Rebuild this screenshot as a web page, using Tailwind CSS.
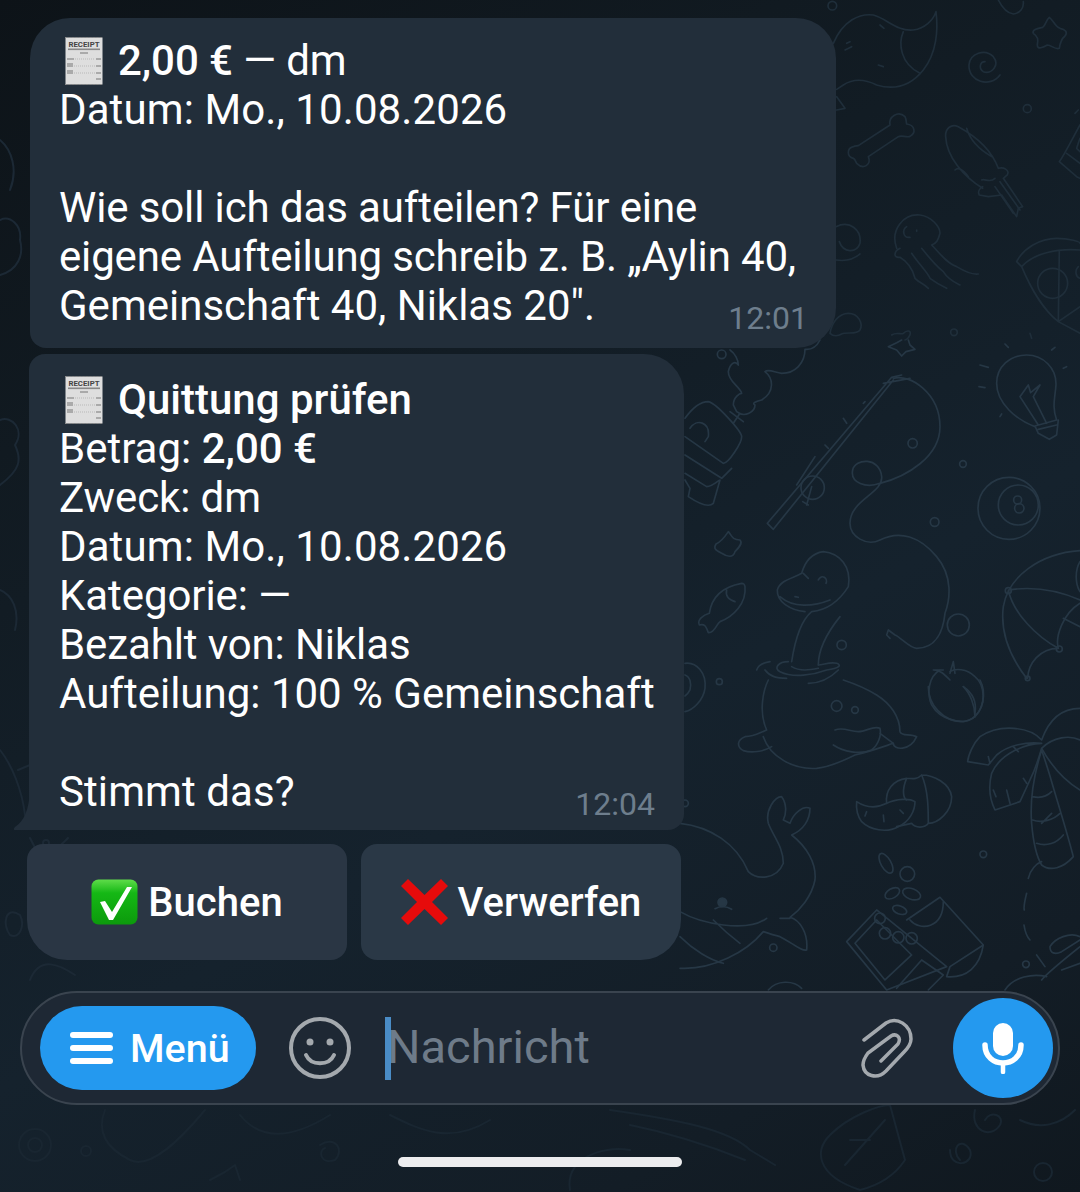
<!DOCTYPE html>
<html lang="de">
<head>
  <meta charset="UTF-8" />
  <meta name="viewport" content="width=device-width, initial-scale=1.0"/>
  <title>Chat</title>
  <script src="https://cdn.jsdelivr.net/npm/@tailwindcss/browser@4"></script>
</head>
<body class="bg-[#111a22]">
<div class="relative w-[1080px] h-[1192px] overflow-hidden font-['Roboto',sans-serif] text-white bg-[linear-gradient(150deg,#0d1318_0%,#111a21_25%,#15222d_60%,#131d26_85%,#10181f_100%)]">

  <!-- Wallpaper doodles -->
  <svg class="absolute inset-0" width="1080" height="1192" viewBox="0 0 1080 1192" fill="none" stroke-linecap="round" stroke-linejoin="round">
    <g stroke="#263745" stroke-width="5">
      <!-- top right -->
      <g transform="translate(800 0) scale(.3333)" stroke="#1f2e3a">
        <path d="M100 130C130 60 180 40 220 45C260 55 290 95 340 90C375 85 400 60 408 35C415 90 410 160 370 210C330 260 280 270 230 255C190 235 160 235 130 255L110 268"/>
        <path d="M310 95C295 130 300 190 360 220M135 150L155 140M140 130L150 125M235 195L250 200M240 75L252 85"/>
        <path d="M110 290L135 325L110 330"/>
        <circle cx="97" cy="17" r="13"/>
        <path d="M595 0C605 20 620 40 640 42C660 40 672 25 670 5"/>
        <path d="M600 225C570 265 505 245 507 195C510 160 555 145 580 170C600 195 575 225 550 215C535 205 540 185 555 185"/>
        <path d="M748 52C760 60 765 80 780 85C795 88 805 95 795 108C783 118 780 130 778 145C765 150 755 135 742 135C730 142 712 150 712 135C715 120 715 110 700 100C695 88 715 85 728 82C738 75 738 60 748 52Z"/>
        <circle cx="682" cy="326" r="12"/>
        <path d="M175 437L270 375C265 350 295 330 315 350C320 360 318 365 320 372C345 375 350 400 328 410C315 412 305 405 295 410L205 470C215 495 190 510 170 490C165 480 165 478 160 475C140 470 140 445 160 440C165 438 170 438 175 437Z"/>
        <path d="M548 565C490 530 440 470 437 410C435 385 455 370 475 380C530 410 575 450 595 505C610 500 630 510 622 525L610 535L668 620L655 625L650 650L605 585L565 590L538 585C532 575 540 565 548 560M500 385C510 420 540 450 575 470M465 510C475 500 490 510 505 530M545 540C555 535 570 550 585 535"/>
        <path d="M600 545L660 630M585 560L640 640"/>
        <path d="M290 745C270 690 310 640 360 645C395 650 420 680 420 700C415 720 410 730 395 735C420 760 440 790 470 800C495 815 515 825 535 822M300 745C280 755 280 775 300 772C330 790 340 815 345 835C360 850 370 850 385 865M335 760C355 790 385 820 390 835C410 850 430 860 440 865M365 745C385 770 410 800 430 815C445 840 470 850 480 855"/>
        <path d="M320 680C305 690 310 715 330 712M350 690L350 694"/>
        <path d="M650 785C670 745 720 715 770 715C810 715 840 725 840 730M650 785L665 800C700 760 770 745 840 750M665 800C690 860 730 930 775 965L840 1000M775 965L840 920M778 755L775 965"/>
        <circle cx="758" cy="850" r="45"/>
        <path d="M835 800C825 810 825 830 840 835"/>
        <path d="M108 680C150 660 185 690 180 730C170 760 130 760 118 725M108 780C140 785 165 775 180 762"/>
        <path d="M90 1000C95 970 115 940 145 940C175 940 190 970 180 990C170 1005 140 995 125 1002C115 1008 100 1010 90 1000Z"/>
        <path d="M275 1005C290 995 305 1005 310 1000C320 990 335 990 330 1005C325 1015 320 1020 315 1020"/>
        <circle cx="462" cy="997" r="10"/>
        <path d="M835 330L825 340M840 375C815 420 790 470 778 485L830 530L840 535M800 460L840 490M840 415L830 445L840 455"/>
        <path d="M690 1000L695 1015"/>
      </g>

      <!-- middle right -->
      <g transform="translate(680 340) scale(.3333)">
        <path d="M420 0C410 20 395 30 375 28C375 70 345 100 305 100C285 98 265 85 255 95C280 115 285 155 245 180C225 185 215 190 225 195C225 215 195 235 170 215L160 195C160 170 180 160 185 160C180 140 145 125 145 95C150 70 165 60 175 75C175 60 165 40 150 30"/>
        <circle cx="125" cy="43" r="13"/>
        <path d="M150 215L190 245M160 250L180 220"/>
        <path d="M15 235C40 200 60 185 85 185C110 190 185 275 185 290C185 310 145 370 130 370L15 290M155 385L125 415L15 345M15 400L80 440C100 440 115 420 120 420L100 490C90 500 70 500 25 470L30 445L15 420M30 265C50 235 90 245 85 290L75 305"/>
        <path d="M665 105L635 112L262 550L280 568L640 120M690 115L610 130M555 185L550 190M490 235L500 250M435 315L445 325M405 350L350 435"/>
        <path d="M640 115C690 100 780 160 780 260C780 350 680 410 600 430C560 445 510 430 518 390C525 355 600 350 605 410C610 460 510 480 510 550C510 590 560 620 600 600C660 570 720 590 770 650C820 710 810 780 795 820C790 870 770 925 710 925C690 925 660 890 645 885L625 870L620 885L630 895"/>
        <circle cx="398" cy="443" r="35"/>
        <path d="M395 440L380 495M368 485L385 495"/>
        <circle cx="698" cy="310" r="14"/><circle cx="849" cy="372" r="10"/><circle cx="764" cy="546" r="13"/><circle cx="485" cy="915" r="14"/><circle cx="118" cy="1025" r="9"/>
        <circle cx="835" cy="855" r="33"/>
        <path d="M1065 260C1010 240 950 190 950 130C950 80 990 45 1040 45C1090 45 1130 85 1128 135C1126 170 1115 200 1130 240L1065 258L1075 280L1108 298L1130 285L1135 240M1075 268L1130 255M1020 170L1045 135L1052 158L1080 135L1060 170L1100 250M1020 170L1075 255"/>
        <path d="M900 75L925 82M897 140L915 143M960 230L965 222M975 12L985 22M1125 22L1115 30M1150 85L1160 80"/>
        <circle cx="987" cy="505" r="93"/><circle cx="1015" cy="495" r="60"/><circle cx="1013" cy="480" r="12"/><circle cx="1018" cy="505" r="14"/>
        <path d="M145 575C155 585 155 600 180 600C190 610 175 625 165 635C160 655 140 650 125 640C105 630 100 625 108 612C125 605 135 590 145 575Z"/>
        <path d="M665 0L650 8L625 20L650 30L665 48L678 35L705 28L690 15L685 0"/>
        <path d="M185 730C130 740 95 770 88 820C70 825 50 840 58 855C75 850 78 860 85 878C105 880 110 850 120 845C160 830 200 790 195 740C193 730 190 730 185 730ZM140 750C135 770 150 780 165 785"/>
        <path d="M335 965C345 900 365 840 395 815C445 810 480 780 505 740C515 680 480 640 430 635C395 640 375 665 365 700C340 715 300 720 292 750C290 785 330 810 375 815M415 975C415 930 440 880 480 830M300 770C340 805 400 800 450 780M370 700L385 715M415 720C425 700 445 715 438 730M345 770L355 772"/>
        <path d="M325 965C295 965 280 985 300 995C340 1015 400 1005 440 990C480 985 485 975 470 970C450 965 430 975 415 975M335 980C360 995 390 990 415 985M230 990C235 975 250 968 270 965M255 990C270 1010 290 1015 320 1015M385 1030C420 1030 450 1015 475 990"/>
        <path d="M15 970C50 965 80 1000 75 1045C70 1080 40 1110 15 1115M15 1005C30 1010 35 1030 30 1050C25 1060 20 1065 15 1068"/>
        <path d="M780 990C745 1010 740 1060 755 1095C780 1140 850 1160 885 1130C920 1095 915 1035 885 1010C860 985 825 985 810 995M850 1040C880 1060 890 1090 885 1120M810 1020C790 1000 780 990 760 990L790 990M810 1000L820 965L825 1000"/>
        <path d="M1040 1015C990 950 960 880 970 800C985 710 1080 640 1200 632M985 750C1050 740 1120 745 1200 780M985 750C1000 820 1070 890 1135 925M1135 925C1080 925 1045 970 1043 1015M1135 925C1125 890 1150 820 1200 790M1150 835L1200 860M1200 665C1185 690 1185 730 1200 755"/>
        <circle cx="985" cy="752" r="9"/><circle cx="1138" cy="927" r="9"/><circle cx="1043" cy="1015" r="7"/>
      </g>

      <!-- lower right -->
      <g transform="translate(680 680) scale(.3333)">
        <path d="M260 150C235 95 250 30 265 0M260 150C235 160 225 170 195 170C170 180 170 200 190 212C215 220 250 215 275 200M250 170C270 230 340 270 410 265C455 260 495 240 525 225C570 215 610 200 640 190C640 210 690 215 710 170C690 160 665 170 660 155C660 110 630 70 590 45C550 20 520 10 490 0"/>
        <path d="M465 150C490 140 510 155 535 155C560 155 580 135 600 145C605 165 595 195 575 210C540 225 490 215 460 195M600 160L640 190"/>
        <circle cx="470" cy="78" r="16"/><circle cx="525" cy="90" r="10"/>
        <path d="M745 20C745 70 785 125 850 125C890 120 915 80 910 30C908 15 905 10 900 0M850 20C870 40 885 75 885 110"/>
        <path d="M1085 180C1110 110 1150 85 1200 85M1085 180C1050 140 960 130 900 170C880 190 865 225 863 245L925 255L950 225C985 195 1040 185 1085 190C1040 190 960 220 935 280C925 320 930 360 945 390L1020 365L1050 300C1065 270 1075 240 1085 205C1120 170 1170 165 1200 180M1085 205C1110 250 1150 300 1200 330M1000 200L1015 215M925 230L930 250M980 330L990 370M1030 295L1040 310M940 330L948 350"/>
        <path d="M1085 210C1060 290 1050 370 1055 430C1060 490 1070 530 1085 555C1110 575 1150 565 1180 530C1165 470 1140 390 1115 305C1105 270 1095 240 1085 210M1058 350C1080 355 1100 350 1115 335M1058 420C1085 430 1120 420 1140 400M1070 490C1100 500 1130 490 1150 465M1085 430L1115 400M1045 595C1050 570 1070 550 1085 545"/>
        <path d="M530 365C560 385 590 385 620 370C650 355 690 355 705 365C705 390 690 425 655 440C620 460 570 450 545 425C530 405 528 385 530 365ZM560 395L555 408M610 405L612 425M660 390L670 400"/>
        <path d="M620 370C615 330 640 300 680 295C695 295 710 300 725 285C760 285 810 310 815 350C815 395 775 430 745 430C735 445 705 445 695 430L650 440M680 295C665 330 670 355 680 360M725 285C745 330 745 390 745 430"/>
        <ellipse cx="618" cy="550" rx="15" ry="33" transform="rotate(-30 618 550)"/>
        <circle cx="682" cy="582" r="22"/>
        <ellipse cx="637" cy="640" rx="24" ry="14" transform="rotate(-30 637 640)"/>
        <ellipse cx="695" cy="642" rx="28" ry="16" transform="rotate(20 695 642)"/>
        <ellipse cx="659" cy="690" rx="22" ry="12" transform="rotate(20 659 690)"/>
        <circle cx="910" cy="523" r="10"/>
        <path d="M500 785L590 690L800 860L620 930L500 785ZM525 790L590 720L695 825L615 900L525 790ZM680 720L780 652L910 795L810 860L800 890C860 895 900 860 910 795M690 720C720 755 790 745 790 665"/>
        <path d="M650 925L725 840L790 885L745 930"/>
        <circle cx="600" cy="715" r="16"/><circle cx="615" cy="760" r="17"/><circle cx="655" cy="772" r="17"/><circle cx="695" cy="775" r="17"/>
        <path d="M0 430C90 440 170 490 205 575C230 600 290 600 310 550C310 500 280 470 265 430C255 390 285 350 305 350C320 370 320 400 310 420L330 430C340 400 370 375 390 385C390 420 370 450 335 465C380 500 410 550 405 600C395 650 360 690 330 712C360 720 385 760 380 810C365 815 340 790 300 770C280 765 265 760 250 755C200 815 100 870 0 865"/>
        <path d="M0 695C60 730 200 760 260 715M300 715L330 715M100 720C130 750 160 775 180 790M0 770C40 810 90 840 130 850"/>
        <circle cx="127" cy="667" r="13" fill="#263745"/>
        <path d="M105 686C120 678 140 678 155 688"/>
        <circle cx="280" cy="803" r="11"/><circle cx="15" cy="370" r="10"/>
        <path d="M1040 640C1035 660 1030 680 1033 690M1032 735C1035 755 1040 770 1050 780M1070 825L1095 860M975 930C1000 890 1060 880 1100 890"/>
        <circle cx="1038" cy="853" r="10"/>
        <path d="M1200 770C1170 755 1125 775 1110 800C1110 820 1125 825 1145 815L1200 780M1200 800C1150 840 1100 880 1085 900M1200 850L1145 870"/>
        <path d="M265 930C290 900 340 900 365 925"/>
      </g>

      <!-- left margin -->
      <g stroke="#1c2935" stroke-width="2">
        <path d="M0 140C12 150 18 170 10 190"/>
        <path d="M0 220C10 215 22 225 20 240C24 255 18 270 0 275"/>
        <path d="M0 420C12 415 25 430 15 445C22 460 20 470 0 485"/>
        <path d="M0 590C12 595 20 610 15 630"/>
        <path d="M0 750C12 765 22 790 25 815M18 770L30 765M30 838C35 850 45 860 48 862C52 850 62 845 68 838"/>
        <circle cx="46" cy="843" r="3"/>
        <path d="M20 915C5 905 2 925 10 935C20 940 25 925 20 915"/>
        <path d="M30 980C40 955 60 965 75 975"/>
      </g>
      <g stroke="#192631" stroke-width="2">
        <circle cx="35" cy="1145" r="16"/><circle cx="35" cy="1145" r="7"/>
        <circle cx="86" cy="1151" r="5"/>
        <path d="M105 1110C95 1135 110 1150 130 1160C150 1170 180 1140 205 1110"/>
        <path d="M240 1115C260 1140 290 1140 330 1115"/>
        <path d="M320 1145C335 1135 345 1150 335 1160C320 1165 318 1150 325 1148"/>
        <path d="M210 1180L225 1172L235 1165L240 1180"/>
        <path d="M390 1115C420 1130 450 1145 490 1120"/>
        <path d="M570 1190C565 1160 600 1145 630 1150"/>
        <path d="M610 1110C680 1120 730 1130 750 1150L775 1165M630 1125C680 1135 720 1150 745 1160"/>
        <path d="M860 1190C815 1175 815 1150 830 1135C850 1115 880 1105 890 1105L905 1160C895 1175 880 1185 860 1190ZM845 1165L885 1120M850 1140L870 1140"/>
        <path d="M960 1160C950 1150 960 1135 970 1150C975 1165 950 1170 950 1150"/>
        <path d="M975 1110C970 1130 990 1140 1000 1125C1005 1115 990 1110 985 1120"/>
        <circle cx="1043" cy="1172" r="9"/>
        <path d="M1020 1120C1040 1130 1060 1125 1075 1110"/>
      </g>
    </g>
  </svg>

  <div class="relative flex flex-col h-full pt-[18px]">

    <!-- Bubble: Aufteilung -->
    <div class="relative ml-[30px] w-[806px] h-[330px] pl-[29px] pt-[18px] bg-[#222e3a] rounded-t-[40px] rounded-br-[40px] rounded-bl-[16px] text-[42px] leading-[49px]">
      <p class="flex items-center h-[49px]">
        <svg class="mr-[15px] ml-[6px] shrink-0" width="38" height="48" viewBox="0 0 38 48">
          <rect x="0.5" y="0.5" width="37" height="47" fill="#dedede"/>
          <path d="M0 0.500h38M0 47.500h38" stroke="#8a8a8a" stroke-dasharray="2 1.500"/>
          <text x="19" y="10" text-anchor="middle" font-size="7.800" font-weight="700" fill="#444">RECEIPT</text>
          <rect x="3" y="11.500" width="32" height="1.600" fill="#888"/>
          <path d="M15 16h8M2 22h7M2 27h6M2 29h6M2 34h6M2 36h6M31 22h5M31 29h5M31 36h5M31 42h5" stroke="#777" stroke-width="1"/>
          <path d="M10 22h20M9 29h21M9 36h21" stroke="#aaa" stroke-width=".7" stroke-dasharray="1 1"/>
        </svg>
        <span class="tracking-[-0.08px]"><span class="font-medium">2,00 €</span> — dm</span>
      </p>
      <p class="tracking-[0.1px]">Datum: Mo., 10.08.2026</p>
      <p>&nbsp;</p>
      <p class="tracking-[-0.115px]">Wie soll ich das aufteilen? Für eine</p>
      <p class="tracking-[-0.15px]">eigene Aufteilung schreib z. B. „Aylin 40,</p>
      <p>Gemeinschaft 40, Niklas 20".</p>
      <span class="absolute right-[28px] bottom-[11px] text-[32px] leading-[38px] text-[#6e7e8d]">12:01</span>
    </div>

    <!-- Bubble: Quittung -->
    <div class="relative mt-[6px] ml-[29px] w-[655px] h-[476px] pl-[30px] pt-[21px] bg-[#222e3a] rounded-tl-[16px] rounded-tr-[40px] rounded-br-[16px] text-[42px] leading-[49px]">
      <svg class="absolute left-[-15px] bottom-0" width="16" height="40" viewBox="0 0 16 40">
        <path d="M16 0V40H1C-1 40 0 38 1 37C10 31 15 20 16 0Z" fill="#222e3a"/>
      </svg>
      <p class="flex items-center h-[49px]">
        <svg class="mr-[15px] ml-[6px] shrink-0" width="38" height="48" viewBox="0 0 38 48">
          <rect x="0.5" y="0.5" width="37" height="47" fill="#dedede"/>
          <path d="M0 0.500h38M0 47.500h38" stroke="#8a8a8a" stroke-dasharray="2 1.500"/>
          <text x="19" y="10" text-anchor="middle" font-size="7.800" font-weight="700" fill="#444">RECEIPT</text>
          <rect x="3" y="11.500" width="32" height="1.600" fill="#888"/>
          <path d="M15 16h8M2 22h7M2 27h6M2 29h6M2 34h6M2 36h6M31 22h5M31 29h5M31 36h5M31 42h5" stroke="#777" stroke-width="1"/>
          <path d="M10 22h20M9 29h21M9 36h21" stroke="#aaa" stroke-width=".7" stroke-dasharray="1 1"/>
        </svg>
        <span class="font-medium">Quittung prüfen</span>
      </p>
      <p>Betrag: <span class="font-medium">2,00 €</span></p>
      <p class="tracking-[-0.1px]">Zweck: dm</p>
      <p class="tracking-[0.1px]">Datum: Mo., 10.08.2026</p>
      <p class="tracking-[-0.08px]">Kategorie: —</p>
      <p class="tracking-[-0.11px]">Bezahlt von: Niklas</p>
      <p>Aufteilung: 100 % Gemeinschaft</p>
      <p>&nbsp;</p>
      <p class="tracking-[0.08px]">Stimmt das?</p>
      <span class="absolute right-[29px] bottom-[7px] text-[32px] leading-[38px] text-[#6e7e8d]">12:04</span>
    </div>

    <!-- Inline keyboard -->
    <div class="flex gap-[14px] mt-[14px] ml-[27px] text-[40px] leading-[48px] font-medium">
      <button class="flex items-center justify-center w-[320px] h-[116px] pt-[2px] bg-[#2a3644] rounded-t-[16px] rounded-br-[16px] rounded-bl-[40px]">
        <svg class="mr-[10px] mt-[-2px]" width="47" height="46" viewBox="0 0 47 46">
          <defs><linearGradient id="tick" x1="0" y1="0" x2="0" y2="1"><stop offset="0" stop-color="#5fdc4a"/><stop offset=".3" stop-color="#15b815"/><stop offset="1" stop-color="#0c9a0c"/></linearGradient></defs>
          <rect x="0.500" y="0.500" width="46" height="45" rx="7" fill="url(#tick)"/>
          <path d="M9 23L14 22L21 33L36 8L41 8L22 41H18Z" fill="#fff"/>
        </svg>
        Buchen
      </button>
      <button class="flex items-center justify-center w-[320px] h-[116px] pt-[2px] bg-[#2a3846] rounded-t-[16px] rounded-bl-[16px] rounded-br-[40px]">
        <svg class="mr-[10px] mt-[-2px]" width="47" height="46" viewBox="0 0 47 46">
          <path d="M7 0L23.500 16L40 0L47 7L31 23L47 39L40 46L23.500 30L7 46L0 39L16 23L0 7Z" fill="#e60b0b"/>
        </svg>
        Verwerfen
      </button>
    </div>

    <!-- Input bar -->
    <div class="flex items-center mt-[31px] mx-[20px] w-[1040px] h-[114px] rounded-[57px] bg-[#1e2834] border-2 border-[#3a444f] pl-[18px] pr-[5px]">
      <div class="flex items-center shrink-0 w-[216px] h-[84px] rounded-[42px] bg-[#2499ef] pl-[30px] gap-[17px] text-[39.500px] font-medium">
        <svg width="43" height="32" viewBox="0 0 43 32" fill="#fff">
          <rect y="0" width="43" height="6" rx="3"/><rect y="13" width="43" height="6" rx="3"/><rect y="26" width="43" height="6" rx="3"/>
        </svg>
        <span class="pt-[2px]">Menü</span>
      </div>
      <svg class="ml-[33px] shrink-0" width="62" height="62" viewBox="0 0 62 62" fill="none" stroke="#a4a9ae" stroke-width="4" stroke-linecap="round">
        <circle cx="31" cy="31" r="29"/>
        <circle cx="21" cy="25" r="3.500" fill="#a4a9ae" stroke="none"/>
        <circle cx="41" cy="25" r="3.500" fill="#a4a9ae" stroke="none"/>
        <path d="M17 38C22 49 40 49 45 38"/>
      </svg>
      <div class="relative ml-[34px] flex-1 flex items-center h-[63px]">
        <span class="absolute left-0 top-0 w-[6px] h-[63px] bg-[#4f97d6]/90"></span>
        <span class="pl-[2px] pb-[3px] text-[47px] leading-[63px] text-[#6e7b89]">Nachricht</span>
      </div>
      <svg class="shrink-0 mr-[40px]" width="52" height="60" viewBox="0 0 52 60" fill="none" stroke="#a4a9ae" stroke-width="3.500" stroke-linecap="round">
        <path d="M3 22L25 5C36 -2 50 7 50 21C50 26 47 30 43 34L25 53C16 62 3 58 2 47C2 43 4 39 7 35L30 18C35 15 41 19 37 26L20 43"/>
      </svg>
      <div class="flex items-center justify-center shrink-0 w-[100px] h-[100px] rounded-full bg-[#2499ef]">
        <svg width="42" height="52" viewBox="0 0 42 52" fill="none" stroke="#fff" stroke-linecap="round">
          <rect x="11" y="1" width="20" height="33" rx="10" fill="#fff" stroke="none"/>
          <path d="M3 23C3 47 39 47 39 23" stroke-width="5.500"/>
          <path d="M21 42V50" stroke-width="4.500"/>
        </svg>
      </div>
    </div>

    <!-- Home indicator -->
    <div class="mt-[52px] mx-auto w-[284px] h-[10px] rounded-full bg-[#ececee]"></div>
  </div>
</div>
</body>
</html>
